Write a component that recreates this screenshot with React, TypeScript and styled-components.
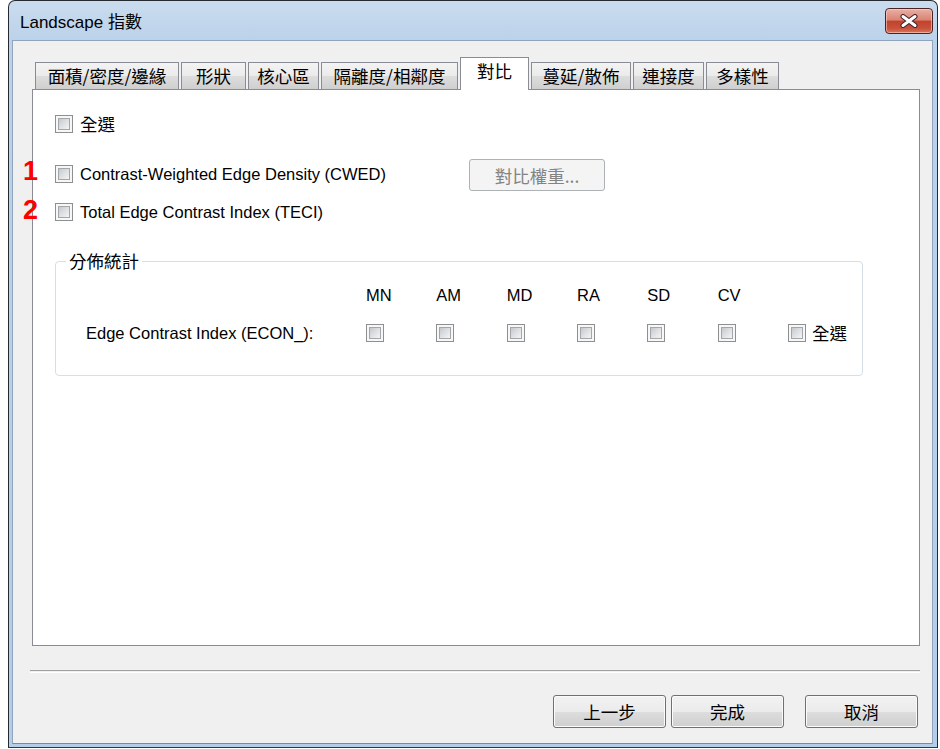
import React from 'react';
import styled, { createGlobalStyle } from 'styled-components';

const GlobalStyle = createGlobalStyle`
  html, body {
    margin: 0;
    padding: 0;
    background: #ffffff;
  }
  body {
    font-family: "Liberation Sans", "Noto Sans CJK TC", sans-serif;
    font-size: 16.5px;
    color: #000;
  }
`;

const CJK = `"Noto Sans CJK TC", "Liberation Sans", sans-serif`;

const Window = styled.div`
  margin-left: 8px;
  width: 930px;
  height: 748px;
  box-sizing: border-box;
  border: 1px solid #252a30;
  border-radius: 7px 7px 0 0;
  background: linear-gradient(#cadcef 0%, #bbd2ea 40px, #b4cde8 100%);
  padding: 0 4px 3px 3px;
  display: flex;
  flex-direction: column;
  border-bottom-color: #1b3e5c;
`;

const TitleBar = styled.div`
  height: 39px;
  display: flex;
  align-items: flex-start;
  justify-content: space-between;
  padding-left: 8px;
`;

const Title = styled.div`
  margin-top: 10px;
  font-size: 17px;
  line-height: 24px;
  color: #000;
`;

const CloseButton = styled.button`
  margin-top: 7px;
  width: 48px;
  height: 26px;
  box-sizing: border-box;
  border: 1px solid #4b2326;
  border-radius: 4px;
  background: linear-gradient(#eab0a3 0%, #d98474 45%, #c2432c 52%, #c8513a 80%, #d9755b 100%);
  box-shadow: inset 0 0 0 1px rgba(255, 220, 210, 0.55);
  display: flex;
  align-items: center;
  justify-content: center;
  padding: 0;
`;

const Client = styled.div`
  flex: 1;
  background: #f0f0f0;
  border: 1px solid #8fa5bd;
  border-bottom-color: #3aa0d6;
  padding: 16px 12px 0 19px;
  display: flex;
  flex-direction: column;
`;

const TabRow = styled.div`
  display: flex;
  align-items: flex-end;
  gap: 2px;
  padding-left: 3px;
  margin-bottom: -1px;
  position: relative;
  z-index: 1;
`;

const Tab = styled.div<{ $w: number; $active?: boolean }>`
  width: ${(p) => p.$w}px;
  box-sizing: border-box;
  height: ${(p) => (p.$active ? 33 : 28)}px;
  border: 1px solid #898c95;
  border-bottom: ${(p) => (p.$active ? 'none' : '1px solid #898c95')};
  background: ${(p) =>
    p.$active ? '#ffffff' : 'linear-gradient(#f3f3f3 0%, #ebebeb 50%, #dddddd 51%, #cfcfcf 100%)'};
  display: flex;
  align-items: center;
  justify-content: center;
  font-family: ${CJK};
  font-size: 17.5px;
  line-height: 1;
  padding-bottom: ${(p) => (p.$active ? 6 : 0)}px;
  white-space: nowrap;
`;

const Panel = styled.div`
  height: 557px;
  box-sizing: border-box;
  background: #ffffff;
  border: 1px solid #898c95;
  padding: 25px 0 0 22px;
  display: flex;
  flex-direction: column;
`;

const CheckRow = styled.div`
  position: relative;
  display: flex;
  align-items: center;
  gap: 7px;
  height: 18px;
`;

const MetricRow = styled.div<{ $tall?: boolean; $top: number }>`
  position: relative;
  display: grid;
  grid-template-columns: 414px auto;
  align-items: center;
  margin-top: ${(p) => p.$top}px;
  height: ${(p) => (p.$tall ? 32 : 18)}px;
`;

const CheckLabel = styled.label`
  display: flex;
  align-items: center;
  gap: 7px;
`;

const Marker = styled.span`
  position: absolute;
  left: -32px;
  top: 50%;
  transform: translateY(-52%);
  color: #ff0000;
  font-weight: bold;
  font-size: 27px;
  font-family: "Liberation Sans", sans-serif;
  line-height: 1;
`;

const CheckBox = styled.span`
  flex: none;
  width: 18px;
  height: 18px;
  box-sizing: border-box;
  border: 1px solid #8e8f8f;
  background: #f7f7f7;
  padding: 2px;
  display: inline-flex;

  &::after {
    content: '';
    flex: 1;
    border: 1px solid #a3a7ac;
    background: linear-gradient(135deg, #c4c8cd 0%, #dcdee1 45%, #f4f4f5 100%);
  }
`;

const Text = styled.span<{ $cjk?: boolean }>`
  font-family: ${(p) => (p.$cjk ? CJK : `"Liberation Sans", "Noto Sans CJK TC", sans-serif`)};
  font-size: ${(p) => (p.$cjk ? 17.5 : 16.5)}px;
  line-height: 20px;
  white-space: nowrap;
`;

const DisabledButton = styled.button`
  width: 136px;
  height: 32px;
  margin-top: 3px;
  box-sizing: border-box;
  border: 1px solid #adb2b5;
  border-radius: 3px;
  background: #f4f4f4;
  color: #838383;
  font-family: ${CJK};
  font-size: 17.5px;
  padding: 0;
`;

const GroupBox = styled.fieldset`
  margin: 31px 0 0 0;
  width: 808px;
  box-sizing: border-box;
  border: 1px solid #d5dfe5;
  border-radius: 4px;
  padding: 14px 0 33px 0;
`;

const Legend = styled.legend`
  margin-left: 10px;
  padding: 0 3px;
  font-family: ${CJK};
  font-size: 17.5px;
  line-height: 20px;
`;

const StatGrid = styled.div`
  display: grid;
  padding-left: 30px;
  grid-template-columns: 280px repeat(7, 70.33px);
  grid-template-rows: 20px 18px;
  row-gap: 19px;
  align-items: center;
`;

const StatCell = styled.div`
  display: flex;
  align-items: center;
  gap: 6px;
`;

const Separator = styled.div`
  margin: 24px 0 0 -2px;
  height: 1px;
  border-top: 1px solid #a0a0a0;
  border-bottom: 1px solid #ffffff;
`;

const Footer = styled.div`
  margin-top: 22px;
  padding-right: 2px;
  display: flex;
  justify-content: flex-end;
`;

const DialogButton = styled.button<{ $gap?: number }>`
  width: 113px;
  height: 33px;
  margin-left: ${(p) => p.$gap ?? 0}px;
  box-sizing: border-box;
  border: 1px solid #707070;
  border-radius: 3px;
  background: linear-gradient(#f2f2f2 0%, #ebebeb 50%, #dddddd 51%, #cfcfcf 100%);
  box-shadow: inset 0 0 0 1px #fbfbfb;
  font-family: ${CJK};
  font-size: 17.5px;
  color: #000;
  padding: 0;
`;

const tabs = [
  { label: '面積/密度/邊緣', w: 144 },
  { label: '形狀', w: 65 },
  { label: '核心區', w: 71 },
  { label: '隔離度/相鄰度', w: 137 },
  { label: '對比', w: 69, active: true },
  { label: '蔓延/散佈', w: 100 },
  { label: '連接度', w: 71 },
  { label: '多樣性', w: 73 },
];

const stats = ['MN', 'AM', 'MD', 'RA', 'SD', 'CV'];

const CloseIcon = () => (
  <svg width="20" height="14" viewBox="0 0 20 14">
    <path d="M4 2.5 L16 11.5 M16 2.5 L4 11.5" stroke="#3a2426" strokeWidth="5" strokeLinecap="round" />
    <path d="M4 2.5 L16 11.5 M16 2.5 L4 11.5" stroke="#ffffff" strokeWidth="3" strokeLinecap="round" />
  </svg>
);

const App: React.FC = () => {
  return (
    <>
      <GlobalStyle />
      <Window>
        <TitleBar>
          <Title>Landscape 指數</Title>
          <CloseButton aria-label="close">
            <CloseIcon />
          </CloseButton>
        </TitleBar>
        <Client>
          <TabRow>
            {tabs.map((t) => (
              <Tab key={t.label} $w={t.w} $active={t.active}>
                {t.label}
              </Tab>
            ))}
          </TabRow>
          <Panel>
            <CheckRow>
              <CheckBox />
              <Text $cjk>全選</Text>
            </CheckRow>

            <MetricRow $tall $top={23}>
              <Marker>1</Marker>
              <CheckLabel>
                <CheckBox />
                <Text>Contrast-Weighted Edge Density (CWED)</Text>
              </CheckLabel>
              <DisabledButton disabled>對比權重...</DisabledButton>
            </MetricRow>

            <MetricRow $top={14}>
              <Marker>2</Marker>
              <CheckLabel>
                <CheckBox />
                <Text>Total Edge Contrast Index (TECI)</Text>
              </CheckLabel>
            </MetricRow>

            <GroupBox>
              <Legend>分佈統計</Legend>
              <StatGrid>
                <div />
                {stats.map((s) => (
                  <Text key={s}>{s}</Text>
                ))}
                <div />
                <Text>Edge Contrast Index (ECON_):</Text>
                {stats.map((s) => (
                  <StatCell key={s}>
                    <CheckBox />
                  </StatCell>
                ))}
                <StatCell>
                  <CheckBox />
                  <Text $cjk>全選</Text>
                </StatCell>
              </StatGrid>
            </GroupBox>
          </Panel>
          <Separator />
          <Footer>
            <DialogButton>上一步</DialogButton>
            <DialogButton $gap={5}>完成</DialogButton>
            <DialogButton $gap={21}>取消</DialogButton>
          </Footer>
        </Client>
      </Window>
    </>
  );
};

export default App;
